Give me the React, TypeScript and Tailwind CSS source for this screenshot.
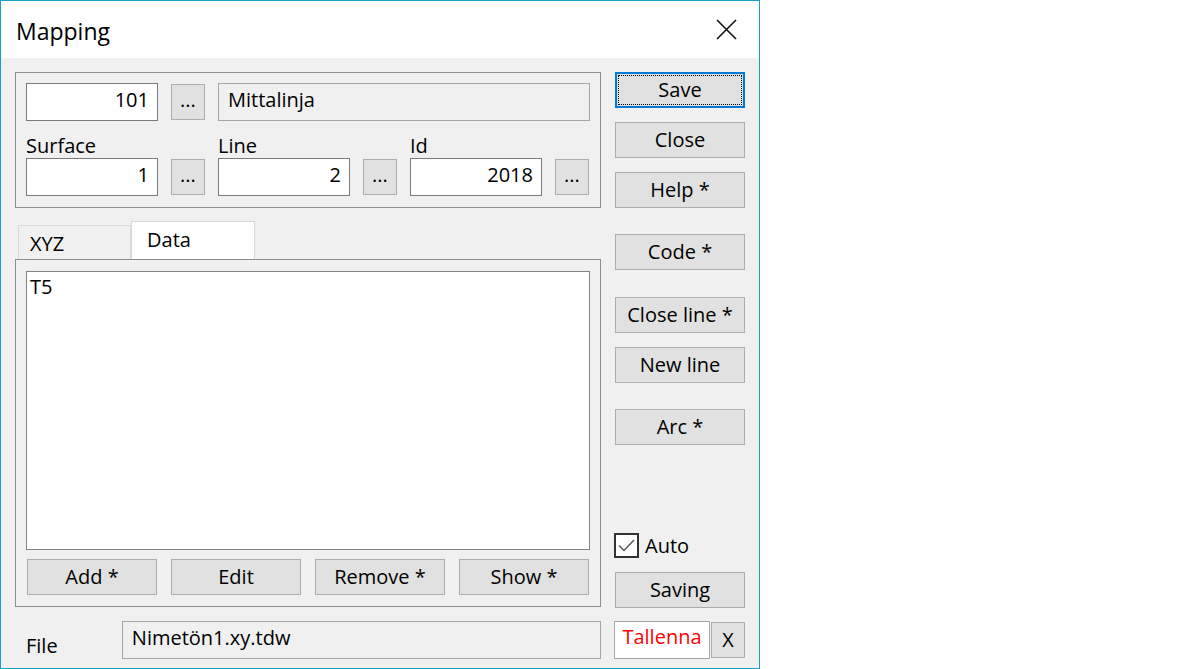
import { useState } from 'react'

const font = { fontFamily: '"Open Sans", "Noto Sans", "Liberation Sans", sans-serif' }

const btn =
  'flex items-center justify-center bg-[#e1e1e1] border border-[#adadad] text-[20px] leading-none text-black'

function Dots() {
  return <div className={`${btn} w-[34px] h-[36px] ml-[13px] pb-[4px]`}>...</div>
}

function NumField({ value }: { value: string }) {
  return (
    <div className="w-[132px] h-[38px] bg-white border border-[#7a7a7a] flex items-center justify-end pr-[8px] pb-[5px] text-[20px]">
      {value}
    </div>
  )
}

function LabeledField({ label, value, first }: { label: string; value: string; first?: boolean }) {
  return (
    <div className={first ? 'flex flex-col' : 'flex flex-col ml-[13px]'}>
      <div className="h-[24px] leading-[24px] text-[20px]">{label}</div>
      <div className="flex items-center">
        <NumField value={value} />
        <Dots />
      </div>
    </div>
  )
}

function SideButton({ label, className = '' }: { label: string; className?: string }) {
  return <div className={`${btn} h-[36px] w-[130px] ${className}`}>{label}</div>
}

export default function App() {
  const [auto, setAuto] = useState(true)
  return (
    <div className="w-[1200px] h-[669px] bg-white text-black" style={font}>
      <div className="w-[760px] h-[669px] border border-[#189fc6] flex flex-col">
        {/* title bar */}
        <div className="h-[57px] bg-white flex items-center justify-between pl-[15px] pr-[22px] pt-[3px]">
          <span className="text-[23px]">Mapping</span>
          <svg width="21" height="21" viewBox="0 0 21 21" className="-mt-[3px]">
            <path d="M1 1 L20 20 M20 1 L1 20" stroke="#111" strokeWidth="1.6" />
          </svg>
        </div>

        {/* body */}
        <div className="flex-1 bg-[#f0f0f0] flex pl-[14px] pt-[14px] gap-[14px]">
          {/* left column */}
          <div className="w-[586px] flex flex-col">
            <div className="h-[136px] border border-[#8f8f8f] px-[10px] pt-[10px]">
              <div className="flex items-center h-[38px]">
                <NumField value="101" />
                <Dots />
                <div className="ml-[13px] w-[372px] h-[38px] border border-[#a6a6a6] bg-[#f0f0f0] flex items-center pl-[9px] pb-[5px] text-[20px]">
                  Mittalinja
                </div>
              </div>
              <div className="flex mt-[13px]">
                <LabeledField label="Surface" value="1" first />
                <LabeledField label="Line" value="2" />
                <LabeledField label="Id" value="2018" />
              </div>
            </div>

            {/* tabs */}
            <div className="flex items-end h-[38px] mt-[13px] pl-[3px]">
              <div className="w-[113px] h-[34px] border border-b-0 border-[#d9d9d9] bg-[#f0f0f0] text-[20px] leading-none pl-[11px] pt-[8px]">
                XYZ
              </div>
              <div className="w-[124px] h-[38px] border border-b-0 border-[#d9d9d9] bg-white text-[20px] leading-none pl-[15px] pt-[8px]">
                Data
              </div>
            </div>
            <div className="h-[348px] border border-[#8f8f8f] px-[10px] pt-[11px] flex flex-col">
              <div className="h-[279px] bg-white border border-[#828282] pl-[3px] pt-[2px] text-[20px] leading-[26px]">
                T5
              </div>
              <div className="flex gap-[14px] mt-[9px] pl-[1px]">
                <SideButton label="Add *" />
                <SideButton label="Edit" />
                <SideButton label="Remove *" />
                <SideButton label="Show *" />
              </div>
            </div>

            {/* file row */}
            <div className="flex items-end mt-[14px]">
              <div className="w-[107px] pl-[11px] text-[20px] leading-none pb-[3px]">File</div>
              <div className="w-[480px] h-[38px] border border-[#a6a6a6] bg-[#f0f0f0] flex items-center pl-[9px] pb-[5px] text-[20px]">
                Nimetön1.xy.tdw
              </div>
            </div>
          </div>

          {/* right column */}
          <div className="w-[130px] flex flex-col">
            <div className="h-[36px] w-[130px] bg-[#e1e1e1] border-2 border-[#0078d7] p-[1px]">
              <div className="h-full w-full border border-dotted border-black flex items-center justify-center text-[20px] leading-none">
                Save
              </div>
            </div>
            <SideButton label="Close" className="mt-[14px]" />
            <SideButton label="Help *" className="mt-[14px]" />
            <SideButton label="Code *" className="mt-[26px]" />
            <SideButton label="Close line *" className="mt-[27px]" />
            <SideButton label="New line" className="mt-[14px]" />
            <SideButton label="Arc *" className="mt-[26px]" />

            <button
              type="button"
              onClick={() => setAuto(!auto)}
              className="flex items-center mt-[88px] -ml-[1px] h-[25px] text-[20px] leading-none"
            >
              <span className="w-[25px] h-[25px] border-2 border-[#333] bg-white flex items-center justify-center">
                {auto && (
                  <svg width="17" height="13" viewBox="0 0 17 13">
                    <path d="M1 6.5 L6 11.5 L16 1" fill="none" stroke="#555" strokeWidth="1.4" />
                  </svg>
                )}
              </span>
              <span className="ml-[6px]">Auto</span>
            </button>

            <SideButton label="Saving" className="mt-[14px]" />

            <div className="flex items-center mt-[13px] -ml-[1px]">
              <div className="w-[96px] h-[38px] bg-white border border-[#a6a6a6] flex items-center justify-center text-[20px] text-[#ff0000] pb-[6px]">
                Tallenna
              </div>
              <div className={`${btn} w-[34px] h-[36px] ml-[1px]`}>X</div>
            </div>
          </div>
        </div>
      </div>
    </div>
  )
}
